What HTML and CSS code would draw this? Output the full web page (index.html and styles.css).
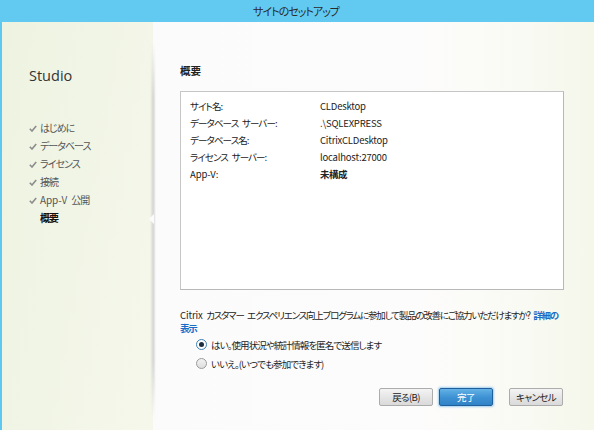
FILE: index.html
```html
<!DOCTYPE html>
<html lang="ja">
<head>
<meta charset="utf-8">
<title>サイトのセットアップ</title>
<link rel="stylesheet" href="styles.css">
</head>
<body>
<div class="window">
  <div class="titlebar">サイトのセットアップ</div>
  <div class="content">
    <aside class="sidebar">
      <div class="brand">Studio</div>
      <ul class="steps">
        <li class="done"><svg class="check" viewBox="0 0 8 7"><path d="M0.8 3.8 L3 6 L7.2 1" /></svg>はじめに</li>
        <li class="done"><svg class="check" viewBox="0 0 8 7"><path d="M0.8 3.8 L3 6 L7.2 1" /></svg>データベース</li>
        <li class="done"><svg class="check" viewBox="0 0 8 7"><path d="M0.8 3.8 L3 6 L7.2 1" /></svg>ライセンス</li>
        <li class="done"><svg class="check" viewBox="0 0 8 7"><path d="M0.8 3.8 L3 6 L7.2 1" /></svg>接続</li>
        <li class="done"><svg class="check" viewBox="0 0 8 7"><path d="M0.8 3.8 L3 6 L7.2 1" /></svg><span class="latin">App-V</span> 公開</li>
        <li class="current">概要</li>
      </ul>
    </aside>
    <main class="panel">
      <div class="pointer"></div>
      <h1 class="heading">概要</h1>
      <div class="summary">
        <div class="row"><span class="label">サイト名:</span><span class="value">CLDesktop</span></div>
        <div class="row"><span class="label">データベース サーバー:</span><span class="value">.\SQLEXPRESS</span></div>
        <div class="row"><span class="label">データベース名:</span><span class="value">CitrixCLDesktop</span></div>
        <div class="row"><span class="label">ライセンス サーバー:</span><span class="value">localhost:27000</span></div>
        <div class="row"><span class="label latin">App-V:</span><span class="value strong">未構成</span></div>
      </div>
      <p class="ceip"><span class="latin">Citrix</span> カスタマー エクスペリエンス向上プログラムに参加して製品の改善にご協力いただけますか? <a class="link" href="#">詳細の<br>表示</a></p>
      <div class="options">
        <label class="option"><span class="radio checked"></span>はい。使用状況や統計情報を匿名で送信します</label>
        <label class="option"><span class="radio"></span>いいえ。(いつでも参加できます)</label>
      </div>
      <div class="buttons">
        <button class="btn">戻る(B)</button>
        <button class="btn primary">完了</button>
        <button class="btn cancel">キャンセル</button>
      </div>
    </main>
  </div>
</div>
</body>
</html>
```

FILE: styles.css
```css
* { box-sizing: border-box; }
html, body {
  margin: 0;
  padding: 0;
  width: 594px;
  height: 430px;
  overflow: hidden;
}
body {
  font-family: "Noto Sans CJK JP", "Noto Sans", sans-serif;
  font-size: 9.5px;
  letter-spacing: -0.9px;
  word-spacing: 2.5px;
  color: #1e1e1e;
  font-feature-settings: "palt";
  background: #f4f7ea;
}
.latin {
  letter-spacing: -0.1px;
}
.window {
  width: 594px;
  height: 430px;
  border-left: 2px solid #5ec8f0;
  display: flex;
  flex-direction: column;
}
.titlebar {
  flex: none;
  height: 22px;
  margin-left: -2px;
  background: #62caf0;
  color: #2a2a2a;
  font-size: 11px;
  letter-spacing: -1px;
  line-height: 22px;
  text-align: center;
  padding-right: 2px;
}
.content {
  flex: 1;
  display: flex;
  background: linear-gradient(100deg, #eef3e1 0%, #f6f8ed 40%, #f7f9ef 70%, #f2f6e6 100%);
}
.sidebar {
  flex: none;
  width: 151px;
  padding: 45px 0 0 27px;
}
.brand {
  font-family: "Open Sans", sans-serif;
  font-size: 14.5px;
  letter-spacing: 0;
  line-height: 18px;
  color: #333;
}
.steps {
  list-style: none;
  margin: 34px 0 0;
  padding: 0;
}
.steps li {
  display: flex;
  align-items: center;
  height: 18px;
  line-height: 18px;
  color: #555;
  font-size: 10px;
  letter-spacing: -1px;
  word-spacing: 3px;
  white-space: pre;
}
.check {
  flex: none;
  width: 8px;
  height: 7px;
  margin-right: 3px;
  fill: none;
  stroke: #8c8c8c;
  stroke-width: 1.6;
}
.steps li.current {
  padding-left: 11px;
  color: #111;
  font-weight: bold;
}
.panel {
  position: relative;
  flex: 1;
  min-width: 0;
  padding: 42px 31px 0 27px;
  background: linear-gradient(90deg, #fcfbfc 0%, #fdfcfc 60%, #f9faf3 85%, #f4f7ea 100%);
}
.panel::before {
  content: "";
  position: absolute;
  left: -3px;
  top: 20px;
  bottom: 12px;
  width: 6px;
  background: linear-gradient(90deg, rgba(0,0,0,0) 0%, rgba(120,120,130,0.28) 60%, rgba(255,255,255,0.2) 100%);
  -webkit-mask-image: linear-gradient(180deg, transparent 0%, #000 15%, #000 85%, transparent 100%);
  mask-image: linear-gradient(180deg, transparent 0%, #000 15%, #000 85%, transparent 100%);
}
.pointer {
  position: absolute;
  left: -4px;
  top: 192px;
  width: 0;
  height: 0;
  border-top: 5px solid transparent;
  border-bottom: 5px solid transparent;
  border-right: 5px solid #fcfbfc;
}
.heading {
  margin: 0;
  font-size: 10.5px;
  letter-spacing: 0;
  line-height: 14px;
  font-weight: bold;
  color: #222;
}
.summary {
  margin-top: 13px;
  width: 384px;
  height: 199px;
  background: #fff;
  border: 1px solid #c6c6c6;
  border-right-color: #b8b8b8;
  border-bottom-color: #b8b8b8;
  padding: 6px 9px;
}
.row {
  display: flex;
  height: 17px;
  line-height: 17px;
}
.label {
  flex: none;
  width: 130px;
  color: #222;
}
.value {
  color: #222;
  letter-spacing: -0.2px;
}
.value.strong {
  font-weight: bold;
  letter-spacing: -0.5px;
}
.ceip {
  margin: 19px 0 0;
  line-height: 13px;
  letter-spacing: -1.2px;
  color: #222;
  white-space: nowrap;
}
.link {
  color: #1a6dc6;
  font-weight: bold;
  text-decoration: none;
}
.options {
  margin-top: 0;
  padding-left: 16px;
}
.option {
  display: flex;
  align-items: center;
  height: 19px;
  color: #222;
}
.radio {
  flex: none;
  width: 11px;
  height: 11px;
  border-radius: 50%;
  border: 1px solid #9a9a9a;
  background: linear-gradient(180deg, #f2f2f2, #dedede);
  margin-right: 4px;
  display: flex;
  align-items: center;
  justify-content: center;
}
.radio.checked {
  border-color: #3c7fb1;
  background: #fff;
}
.radio.checked::after {
  content: "";
  width: 5px;
  height: 5px;
  border-radius: 50%;
  background: #1f2f3f;
}
.buttons {
  margin-top: 15px;
  display: flex;
  justify-content: flex-end;
  width: 383px;
}
.btn {
  width: 54px;
  height: 18px;
  padding: 0;
  font-family: "Noto Sans CJK JP", sans-serif;
  font-size: 9.5px;
  letter-spacing: -0.6px;
  font-feature-settings: "palt";
  color: #222;
  border: 1px solid #acacac;
  border-radius: 2px;
  background: linear-gradient(180deg, #f4f4f4 0%, #e6e6e6 50%, #dadada 100%);
}
.btn.primary {
  margin-left: 6px;
  color: #fff;
  border-color: #1e5f9c;
  background: linear-gradient(180deg, #64b2e6 0%, #3f93d4 50%, #2f82c6 100%);
  box-shadow: 0 0 2px 1px rgba(90,170,230,0.55);
}
.btn.cancel {
  margin-left: 16px;
}
```
